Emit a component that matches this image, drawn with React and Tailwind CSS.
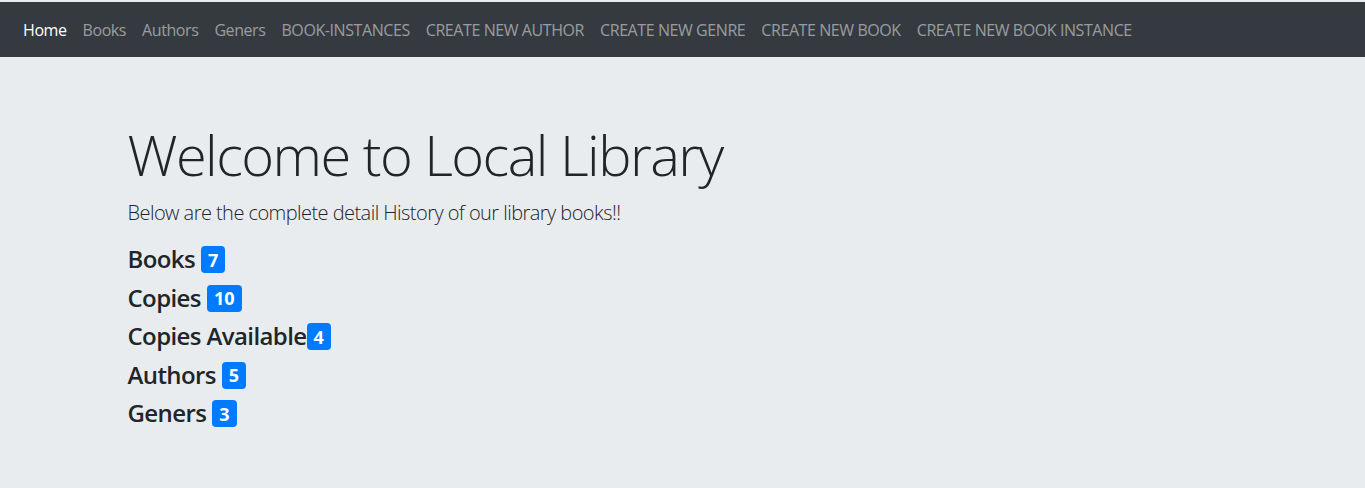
import React from 'react';

const links = [
  'Books',
  'Authors',
  'Geners',
  'BOOK-INSTANCES',
  'CREATE NEW AUTHOR',
  'CREATE NEW GENRE',
  'CREATE NEW BOOK',
  'CREATE NEW BOOK INSTANCE',
];

const stats = [
  { label: 'Books', count: 7, space: true },
  { label: 'Copies', count: 10, space: true },
  { label: 'Copies Available', count: 4, space: false },
  { label: 'Authors', count: 5, space: true },
  { label: 'Geners', count: 3, space: true },
];

export default function App() {
  return (
    <div className="min-h-[488px] bg-[#e9ecef] pt-[2px] text-[#212529] font-['Open_Sans',sans-serif]">
      <nav className="h-[55px] bg-[#343a40] flex items-center px-[15px]">
        <a className="px-2 text-[16px] tracking-[-0.42px] text-white" href="#">Home</a>
        {links.map(l => (
          <a key={l} className="px-2 text-[16px] tracking-[-0.42px] text-[rgba(255,255,255,0.5)]" href="#">{l}</a>
        ))}
      </nav>

      <div className="w-[1140px] mx-auto px-[15px] pt-[64px]">
        <h1 className="text-[56px] font-light leading-[1.2] tracking-[-1.55px] mb-[10px]">Welcome to Local Library</h1>
        <p className="text-[20px] font-light leading-[1.5] tracking-[-0.55px] mb-[17px]">
          Below are the complete detail History of our library books!!
        </p>
        {stats.map(s => (
          <div key={s.label} className="h-[38.5px] flex items-start">
            <h4 className="text-[24px] font-semibold leading-[1.2] tracking-[-0.6px] flex items-center">
              <span>{s.label}</span>
              <span
                className={
                  (s.space ? 'ml-[6px] ' : '') +
                  'bg-[#007bff] text-white rounded-[4px] text-[18px] font-bold leading-none tracking-normal px-[7px] py-[4.5px]'
                }
              >
                {s.count}
              </span>
            </h4>
          </div>
        ))}
      </div>
    </div>
  );
}
